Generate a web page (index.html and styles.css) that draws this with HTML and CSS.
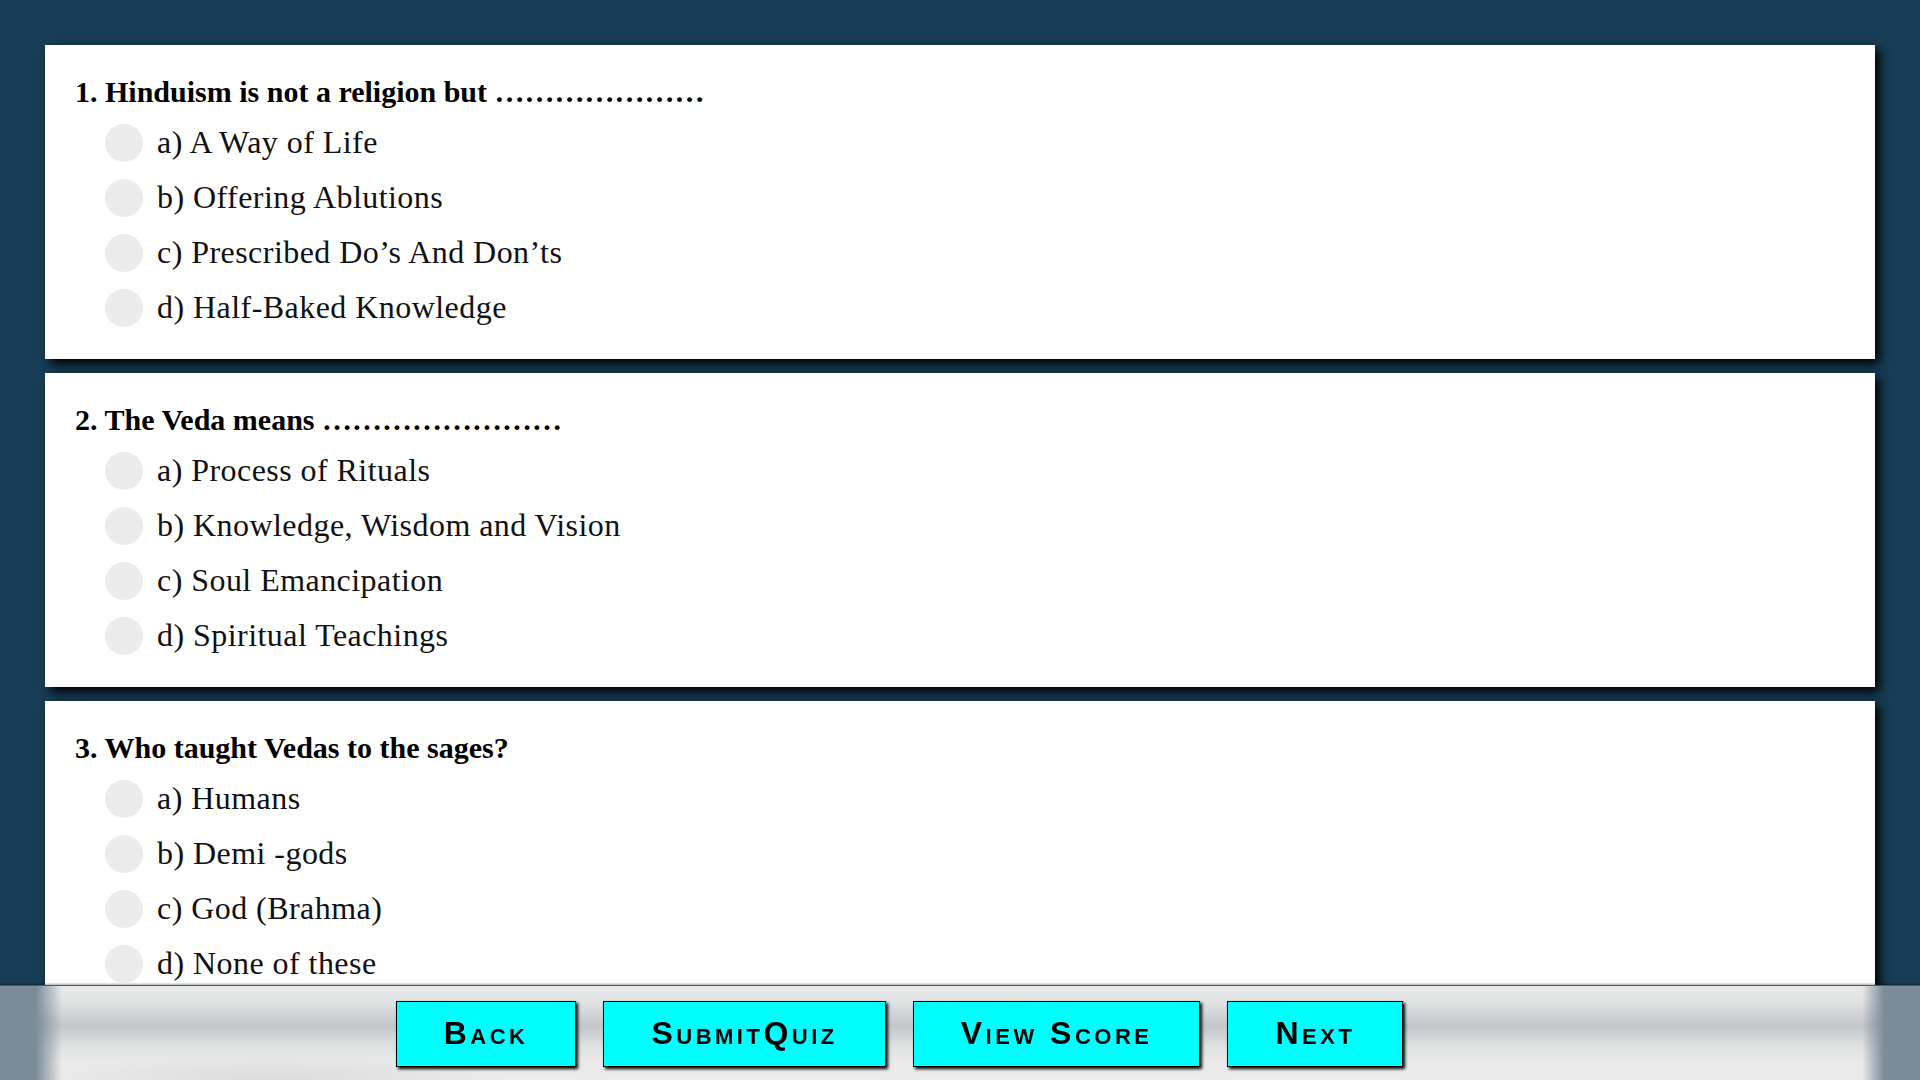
FILE: index.html
```html
<!DOCTYPE html>
<html lang="en">
<head>
<meta charset="utf-8">
<title>Quiz</title>
<link rel="stylesheet" href="styles.css">
</head>
<body>
<main class="quiz">
  <section class="card">
    <h2 class="question">1. Hinduism is not a religion but &hellip;&hellip;&hellip;&hellip;&hellip;&hellip;&hellip;</h2>
    <ul class="options">
      <li><label class="option"><input type="radio" name="q1"><span>a) A Way of Life</span></label></li>
      <li><label class="option"><input type="radio" name="q1"><span>b) Offering Ablutions</span></label></li>
      <li><label class="option"><input type="radio" name="q1"><span>c) Prescribed Do’s And Don’ts</span></label></li>
      <li><label class="option"><input type="radio" name="q1"><span>d) Half-Baked Knowledge</span></label></li>
    </ul>
  </section>
  <section class="card">
    <h2 class="question">2. The Veda means &hellip;&hellip;&hellip;&hellip;&hellip;&hellip;&hellip;&hellip;</h2>
    <ul class="options">
      <li><label class="option"><input type="radio" name="q2"><span>a) Process of Rituals</span></label></li>
      <li><label class="option"><input type="radio" name="q2"><span>b) Knowledge, Wisdom and Vision</span></label></li>
      <li><label class="option"><input type="radio" name="q2"><span>c) Soul Emancipation</span></label></li>
      <li><label class="option"><input type="radio" name="q2"><span>d) Spiritual Teachings</span></label></li>
    </ul>
  </section>
  <section class="card">
    <h2 class="question">3. Who taught Vedas to the sages?</h2>
    <ul class="options">
      <li><label class="option"><input type="radio" name="q3"><span>a) Humans</span></label></li>
      <li><label class="option"><input type="radio" name="q3"><span>b) Demi -gods</span></label></li>
      <li><label class="option"><input type="radio" name="q3"><span>c) God (Brahma)</span></label></li>
      <li><label class="option"><input type="radio" name="q3"><span>d) None of these</span></label></li>
    </ul>
  </section>
</main>
<footer class="actions">
  <button class="btn" type="button">Back</button>
  <button class="btn" type="button">SubmitQuiz</button>
  <button class="btn" type="button">View Score</button>
  <button class="btn" type="button">Next</button>
</footer>
</body>
</html>
```
FILE: styles.css
```css
html, body {
  margin: 0;
  padding: 0;
}

body {
  background: #183d56;
  font-family: "Liberation Serif", "Times New Roman", serif;
  color: #000;
}

.quiz {
  display: flex;
  flex-direction: column;
  gap: 14px;
  padding: 45px 45px 120px;
}

.card {
  background: #fff;
  box-shadow: 5px 5px 10px #000;
  padding: 30px 30px 24px;
}

.question {
  margin: 0 0 6px;
  font-size: 30px;
  line-height: 34px;
  font-weight: bold;
}

.options {
  list-style: none;
  margin: 0;
  padding: 0 0 0 30px;
}

.option {
  display: flex;
  align-items: center;
  height: 55px;
  font-size: 32px;
  letter-spacing: 0.45px;
  color: #111;
}

.option input {
  appearance: none;
  -webkit-appearance: none;
  width: 38px;
  height: 38px;
  margin: 0 14px 0 0;
  border: 0;
  border-radius: 50%;
  background: #ececec;
  flex: none;
}

.actions {
  position: fixed;
  left: 0;
  right: 0;
  bottom: 0;
  display: flex;
  justify-content: center;
  gap: 27px;
  padding: 15px 121px 13px 0;
  border-top: 1px solid #555;
  box-shadow: 0 -1px 2px rgba(0, 0, 0, 0.35);
  background:
    linear-gradient(90deg, #7b8c98 0, #7b8c98 36px, rgba(123, 140, 152, 0) 62px,
      rgba(123, 140, 152, 0) calc(100% - 58px), #7b8c98 calc(100% - 36px), #7b8c98 100%),
    radial-gradient(ellipse 240px 26px at 270px 100%, rgba(0, 0, 0, 0.07), rgba(0, 0, 0, 0)),
    linear-gradient(180deg, #e8e9e9 0, #e3e4e5 14px, #c3c7ca 40px, #dfe1e2 60px, #eaeaea 75px, #ececec 100%);
}

.btn {
  background: #00ffff;
  color: #000;
  border: 1px solid #000;
  box-shadow: 2px 2px 3px #000;
  font-family: "Liberation Sans", Arial, sans-serif;
  font-weight: bold;
  font-size: 32px;
  line-height: 34px;
  font-variant: small-caps;
  letter-spacing: 3.5px;
  padding: 14px 47px 16px;
  margin: 0;
  cursor: pointer;
}
```
